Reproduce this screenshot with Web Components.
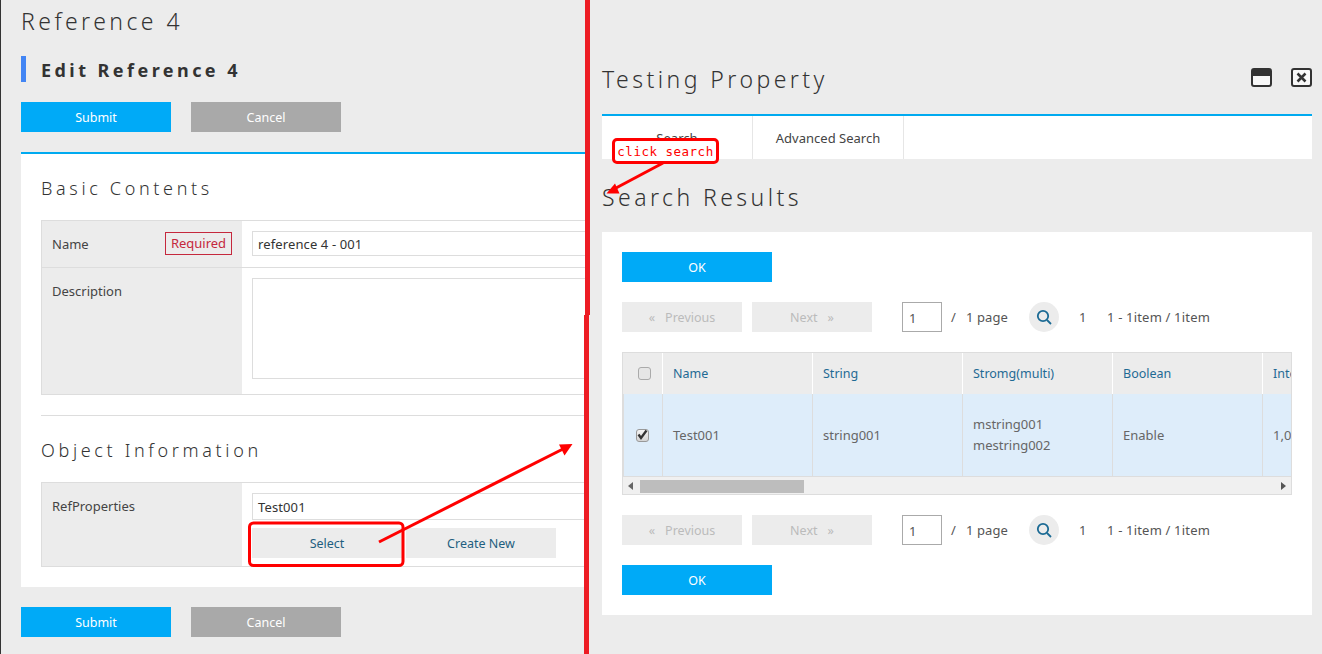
<!DOCTYPE html>
<html>
<head>
<meta charset="utf-8">
<title>Reference 4</title>
<style>
  html, body { margin: 0; height: 100%; overflow: hidden; background: #ececec; }
  body { font-family: "Noto Sans", "Open Sans", sans-serif; font-size: 13px; color: #444; }
</style>
</head>
<body>
<ref-shot>
  <ref-pane slot="left" edge>
    <ref-heading size="page">Reference 4</ref-heading>
    <ref-heading size="edit">Edit Reference 4</ref-heading>
    <ref-actions>
      <ref-button kind="primary">Submit</ref-button>
      <ref-button kind="muted">Cancel</ref-button>
    </ref-actions>
    <ref-card>
      <ref-heading size="section">Basic Contents</ref-heading>
      <ref-form>
        <ref-row height="46" required label="Name"><ref-field height="25">reference 4 - 001</ref-field></ref-row>
        <ref-row height="126" label="Description"><ref-field height="101"></ref-field></ref-row>
      </ref-form>
      <ref-rule></ref-rule>
      <ref-heading size="section">Object Information</ref-heading>
      <ref-form>
        <ref-row height="83" label="RefProperties">
          <ref-field height="27">Test001</ref-field>
          <ref-actions tight>
            <ref-button kind="soft">Select</ref-button>
            <ref-button kind="soft">Create New</ref-button>
          </ref-actions>
        </ref-row>
      </ref-form>
    </ref-card>
    <ref-actions>
      <ref-button kind="primary">Submit</ref-button>
      <ref-button kind="muted">Cancel</ref-button>
    </ref-actions>
  </ref-pane>

  <ref-dialog slot="right">
    <ref-heading size="page" slot="title">Testing Property</ref-heading>
    <ref-tabs slot="tabs"></ref-tabs>
    <ref-heading size="page" slot="results">Search Results</ref-heading>
    <ref-results slot="body"></ref-results>
  </ref-dialog>
</ref-shot>

<script>
function define(name, css, html, setup) {
  customElements.define(name, class extends HTMLElement {
    constructor() {
      super();
      this.attachShadow({ mode: 'open' });
      this.shadowRoot.innerHTML = `<style>${css}</style>${html}`;
    }
    connectedCallback() {
      if (setup) setup(this, this.shadowRoot);
    }
  });
}

define('ref-shot', `
  :host { display: block; position: relative; width: 1322px; height: 654px; overflow: hidden; }
  .wrap { display: flex; height: 100%; }
  .left { display: block; width: 585px; flex: none; overflow: hidden; }
  .right { display: block; flex: 1; min-width: 0; margin-left: 5px; }
  svg { position: absolute; left: 0; top: 0; pointer-events: none; }
  .note { position: absolute; left: 612px; top: 138px; width: 107px; height: 26px; box-sizing: border-box;
    border: 3px solid #f00; border-radius: 5px; background: #fff; color: #f00;
    font: 12.500px/21px "DejaVu Sans Mono", monospace; letter-spacing: .5px; text-align: center; white-space: nowrap; }
`, `
  <div class="wrap">
    <div class="left"><slot name="left"></slot></div>
    <div class="right"><slot name="right"></slot></div>
  </div>
  <svg width="1322" height="654" viewBox="0 0 1322 654">
    <rect x="585" y="0" width="5" height="315" fill="#ed1c24"/>
    <rect x="584" y="315" width="5" height="339" fill="#ed1c24"/>
    <rect x="249.500" y="523" width="153.500" height="42.500" rx="4" fill="none" stroke="#f00" stroke-width="3"/>
    <path d="M379 542 L563 449" stroke="#f00" stroke-width="3" fill="none"/>
    <path d="M572.500 444 L559 444.500 L564.500 455.500 Z" fill="#f00"/>
    <path d="M663 163 L616 188" stroke="#f00" stroke-width="3" fill="none"/>
    <path d="M606.500 193.500 L615 183.500 L619.500 193.500 Z" fill="#f00"/>
  </svg>
  <div class="note">click search</div>
`);

define('ref-pane', `
  :host { display: block; box-sizing: border-box; height: 654px; padding-left: 20px; border-left: 1px solid #333; width: 700px; }
`, `<slot></slot>`);

define('ref-heading', `
  :host { display: block; color: #333; white-space: nowrap; font-family: "Noto Sans", sans-serif; }
  :host([size=page]) { font-size: 23px; font-weight: 300; letter-spacing: 3.450px; line-height: 42px; height: 42px; }
  :host([size=edit]) { font-size: 18px; font-weight: 700; letter-spacing: 3.450px; line-height: 28px; height: 26px;
    margin-top: 14px; border-left: 5px solid #4285f4; padding-left: 15px; }
  :host([size=section]) { font-size: 18px; font-weight: 300; letter-spacing: 3.650px; line-height: 24px; height: 24px; margin-top: 22px; }
`, `<slot></slot>`);

define('ref-actions', `
  :host { display: flex; gap: 20px; margin-top: 20px; }
  :host([tight]) { gap: 4px; margin-top: 8px; }
`, `<slot></slot>`);

define('ref-button', `
  :host { display: block; width: 150px; height: 30px; line-height: 32px; text-align: center; font-size: 12.500px; flex: none; }
  :host([kind=primary]) { background: #00aaf7; color: #fff; }
  :host([kind=muted]) { background: #a9a9a9; color: #fff; }
  :host([kind=soft]) { background: #ececec; color: #1f5f80; }
`, `<slot></slot>`);

define('ref-card', `
  :host { display: block; margin-top: 20px; background: #fff; border-top: 2px solid #00aaf0; height: 433px; padding-left: 20px; box-sizing: content-box; }
`, `<slot></slot>`);

define('ref-form', `
  :host { display: block; margin-top: 20px; width: 640px; border: 1px solid #ddd; border-bottom: 0; }
`, `<slot></slot>`);

define('ref-row', `
  :host { display: flex; border-bottom: 1px solid #ddd; }
  .label { width: 200px; flex: none; box-sizing: border-box; background: #ececec; padding: 0 10px; display: flex; justify-content: space-between; }
  .text { margin-top: 13px; line-height: 20px; color: #444; font-size: 13px; }
  .req { display: none; box-sizing: border-box; width: 67px; height: 23px; margin-top: 11px; border: 1px solid #c5283d; color: #c5283d; text-align: center; line-height: 21px; font-size: 13px; }
  .val { flex: 1; padding: 10px; }
`, `
  <div class="label"><span class="text"></span><span class="req">Required</span></div>
  <div class="val"><slot></slot></div>
`, (el, root) => {
  root.querySelector('.text').textContent = el.getAttribute('label');
  if (el.hasAttribute('required')) root.querySelector('.req').style.display = 'block';
  el.style.height = el.getAttribute('height') + 'px';
});

define('ref-field', `
  :host { display: block; box-sizing: border-box; border: 1px solid #ddd; background: #fff; padding-left: 5px; color: #333; font-size: 13px; letter-spacing: .12px; }
`, `<slot></slot>`, (el) => {
  const h = el.getAttribute('height');
  el.style.height = h + 'px';
  el.style.lineHeight = h + 'px';
});

define('ref-rule', `
  :host { display: block; height: 1px; background: #ddd; margin-top: 20px; width: 640px; }
`, ``);

define('ref-dialog', `
  :host { display: block; box-sizing: border-box; height: 654px; padding: 58px 10px 0 12px; }
  .head { display: flex; justify-content: space-between; align-items: center; height: 42px; }
  .tools { display: flex; gap: 19px; margin-top: -4px; }
  svg { display: block; }
  .tabs { margin-top: 14px; }
  .results { margin-top: 17px; }
  .body { margin-top: 14px; }
`, `
  <div class="head"><slot name="title"></slot>
    <div class="tools">
      <svg width="21" height="19" viewBox="0 0 21 19"><rect x="1" y="1" width="19" height="17" rx="2" fill="#f8f8f8" stroke="#333" stroke-width="2"/><rect x="1" y="1" width="19" height="7" fill="#333"/></svg>
      <svg width="21" height="19" viewBox="0 0 21 19"><rect x="1" y="1" width="19" height="17" rx="2" fill="#f8f8f8" stroke="#333" stroke-width="2"/><path d="M6.500 5.500 L14.500 13.500 M14.500 5.500 L6.500 13.500" stroke="#333" stroke-width="2.500"/></svg>
    </div>
  </div>
  <div class="tabs"><slot name="tabs"></slot></div>
  <div class="results"><slot name="results"></slot></div>
  <div class="body"><slot name="body"></slot></div>
`);

define('ref-tabs', `
  :host { display: flex; background: #fff; border-top: 2px solid #00aaf0; height: 43px; }
  div { width: 150px; border-right: 1px solid #e6e6e6; text-align: center; line-height: 45px; color: #444; font-size: 13px; letter-spacing: .02px; }
`, `<div>Search</div><div>Advanced Search</div>`);

define('ref-pager', `
  :host { display: flex; align-items: center; height: 30px; margin-top: 20px; color: #555; font-size: 13px; }
  .nav { box-sizing: border-box; width: 120px; height: 30px; background: #ececec; color: #bbb; line-height: 32px; text-align: center; font-size: 12.500px; margin-right: 10px; }
  .nav i { font-style: normal; margin: 0 10px; }
  .page { box-sizing: border-box; width: 40px; height: 30px; margin-left: 20px; border: 1px solid #aaa; padding-left: 6px; line-height: 31px; }
  .of { margin-left: 9px; width: 78px; letter-spacing: .1px; }
  .of b { font-weight: 400; margin-right: 10px; }
  .find { width: 30px; height: 30px; border-radius: 50%; background: #ececec; display: flex; align-items: center; justify-content: center; }
  .cur { margin-left: 20px; width: 28px; }
  .count { letter-spacing: .18px; }
`, `
  <div class="nav"><i style="margin-left:0">«</i>Previous</div>
  <div class="nav">Next<i style="margin-right:0">»</i></div>
  <div class="page">1</div>
  <div class="of"><b>/</b>1 page</div>
  <div class="find"><svg width="16" height="16" viewBox="0 0 16 16"><circle cx="7" cy="7" r="5.200" fill="none" stroke="#1b6a94" stroke-width="1.800"/><path d="M11 11 L15 15" stroke="#1b6a94" stroke-width="1.800"/></svg></div>
  <div class="cur">1</div>
  <div class="count">1 - 1item / 1item</div>
`);

define('ref-check', `
  :host { display: block; box-sizing: border-box; width: 13px; height: 13px; border: 1.500px solid #aaa; border-radius: 3px; background: #e6e6e6; position: relative; }
  :host([checked]) { border-color: #999; background: linear-gradient(#f4f4f4, #d4d4d4); }
  svg { position: absolute; left: -1.500px; top: -1.500px; display: none; }
  :host([checked]) svg { display: block; }
`, `<svg width="13" height="13" viewBox="0 0 13 13"><path d="M2.500 6.500 L5 10 L10.500 2.500" fill="none" stroke="#333" stroke-width="2.300"/></svg>`);

define('ref-grid', `
  :host { display: block; box-sizing: border-box; margin-top: 20px; height: 143px; border: 1px solid #ddd; overflow: hidden; position: relative; }
  .table { display: grid; grid-template-columns: 40px 150px 150px 150px 150px 150px; grid-template-rows: 41px 83px; width: 790px; }
  .h, .c { box-sizing: border-box; padding-left: 10px; display: flex; flex-direction: column; justify-content: center; white-space: nowrap; font-size: 12.500px; }
  .h { background: #ececec; color: #1f6a94; border-right: 1px solid #fff; }
  .c { background: #deedfa; color: #666; font-size: 13px; border-right: 1px solid #ddd; border-bottom: 1px solid #ddd; line-height: 21px; }
  .box { padding: 0 0 0 15px; }
  .c.box { padding-left: 12px; border-left: 1px solid #ddd; }
  .bar { height: 18px; background: #f0f0f0; position: relative; }
  .thumb { position: absolute; left: 17px; top: 3px; width: 164px; height: 13px; background: #bdbdbd; }
  .bar svg { position: absolute; top: 5px; }
`, `
  <div class="table">
    <div class="h box"><ref-check></ref-check></div><div class="h">Name</div><div class="h">String</div><div class="h">Stromg(multi)</div><div class="h">Boolean</div><div class="h">Integer</div>
    <div class="c box"><ref-check checked></ref-check></div><div class="c">Test001</div><div class="c">string001</div><div class="c"><span>mstring001</span><span>mestring002</span></div><div class="c">Enable</div><div class="c">1,000</div>
  </div>
  <div class="bar">
    <svg style="left:5px" width="5" height="8" viewBox="0 0 5 8"><path d="M5 0 L0 4 L5 8 Z" fill="#666"/></svg>
    <div class="thumb"></div>
    <svg style="right:5px" width="5" height="8" viewBox="0 0 5 8"><path d="M0 0 L5 4 L0 8 Z" fill="#555"/></svg>
  </div>
`);

define('ref-results', `
  :host { display: block; box-sizing: border-box; background: #fff; height: 383px; padding: 20px; }
`, `
  <ref-button kind="primary">OK</ref-button>
  <ref-pager></ref-pager>
  <ref-grid></ref-grid>
  <ref-pager></ref-pager>
  <ref-button kind="primary" style="margin-top:20px">OK</ref-button>
`);
</script>
</body>
</html>
